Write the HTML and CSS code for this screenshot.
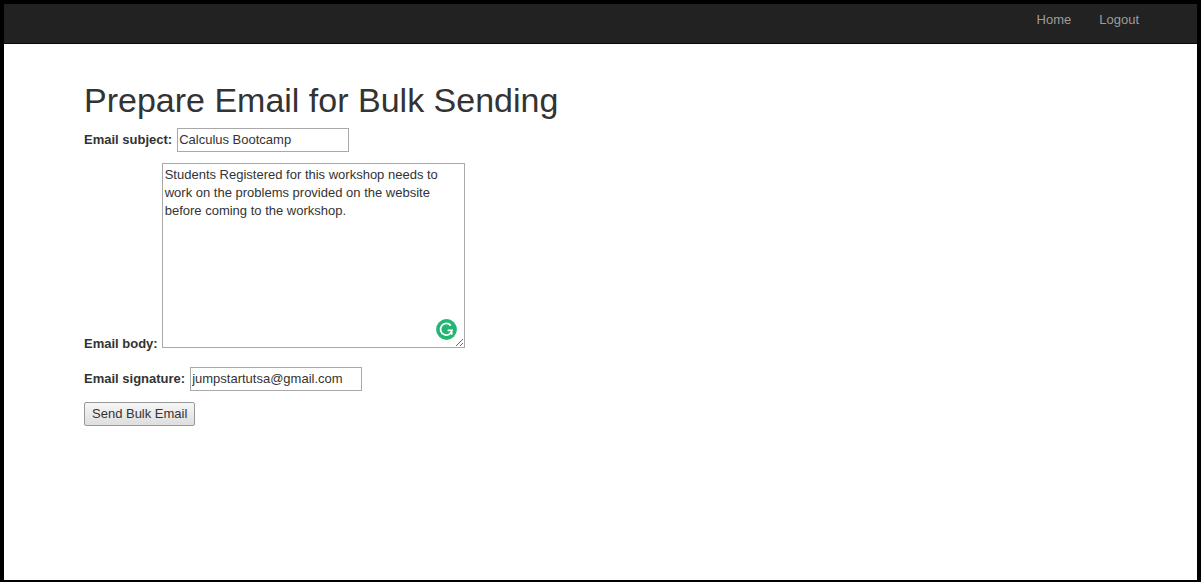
FILE: index.html
```html
<!DOCTYPE html>
<html lang="en">
<head>
  <meta charset="utf-8">
  <title>Prepare Email for Bulk Sending</title>
  <link rel="stylesheet" href="styles.css">
</head>
<body>
  <nav class="navbar">
    <a class="nav-link" href="#">Home</a>
    <a class="nav-link" href="#">Logout</a>
  </nav>
  <main class="content">
    <h1 class="title">Prepare Email for Bulk Sending</h1>
    <form class="email-form">
      <div class="field">
        <label class="label" for="subject">Email subject:</label>
        <input class="text-input" id="subject" type="text" value="Calculus Bootcamp">
      </div>
      <div class="field field-body">
        <label class="label" for="body">Email body:</label>
        <div class="editor">
          <textarea class="text-area" id="body" spellcheck="false">Students Registered for this workshop needs to work on the problems provided on the website before coming to the workshop.</textarea>
          <svg class="checker" viewBox="0 0 21 21" aria-hidden="true">
            <circle cx="10.500" cy="10.500" r="10.400" fill="#23b574"/>
            <path d="M14.800 6.600A5.800 5.800 0 1 0 16 11.300H11.600M15.700 11.300V15.800" fill="none" stroke="#fff" stroke-width="1.700"/>
          </svg>
        </div>
      </div>
      <div class="field">
        <label class="label" for="signature">Email signature:</label>
        <input class="text-input" id="signature" type="text" value="jumpstartutsa@gmail.com">
      </div>
      <button class="send" type="button">Send Bulk Email</button>
    </form>
  </main>
</body>
</html>
```
FILE: styles.css
```css
* {
  box-sizing: border-box;
}

body {
  min-height: 100vh;
  margin: 0;
  border: 4px solid #000;
  border-bottom-width: 2px;
  background: #fff;
  color: #333;
  font: 13px/18px "Liberation Sans", Arial, sans-serif;
}

.navbar {
  display: flex;
  justify-content: flex-end;
  gap: 28px;
  height: 40px;
  padding: 7px 58px 0;
  border-bottom: 1px solid #080808;
  background: #222;
}

.nav-link {
  color: #9d9d9d;
  text-decoration: none;
}

.content {
  padding: 36px 80px;
}

.title {
  margin: 0 0 8px;
  font-size: 34px;
  font-weight: 400;
  line-height: 40px;
}

.email-form {
  display: flex;
  flex-direction: column;
  align-items: flex-start;
  gap: 11px;
}

.field {
  display: flex;
  align-items: center;
  gap: 5px;
}

.field-body {
  align-items: flex-end;
  gap: 4px;
  margin-bottom: 8px;
}

.label {
  font-weight: 700;
}

.field-body .label {
  margin-bottom: -5px;
}

.text-input {
  width: 172px;
  height: 24px;
  padding: 0 1px 2px;
  border: 1px solid #a9a9a9;
  background: #fff;
  color: inherit;
  font: inherit;
}

.editor {
  position: relative;
}

.text-area {
  display: block;
  width: 303px;
  height: 185px;
  padding: 2px;
  border: 1px solid #a9a9a9;
  background: #fff;
  color: inherit;
  font: inherit;
  resize: both;
}

.checker {
  position: absolute;
  right: 8px;
  bottom: 8px;
  width: 21px;
  height: 21px;
}

.send {
  height: 24px;
  padding: 0 7px;
  border: 1px solid #999;
  border-radius: 2px;
  background: linear-gradient(#f6f6f6, #dedede);
  color: inherit;
  font: inherit;
}
```
